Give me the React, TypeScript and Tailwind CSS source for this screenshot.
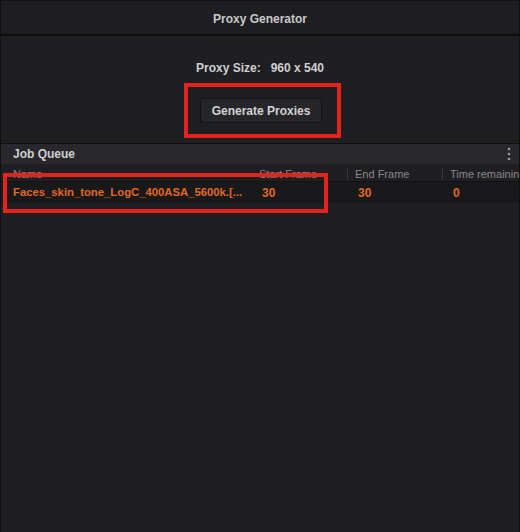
import React from "react";

export default function App() {
  return (
    <div
      className="relative w-[520px] h-[532px] overflow-hidden bg-[#1f1e21] border-x border-t border-[#111113] flex flex-col"
      style={{ fontFamily: '"Liberation Sans", Arial, sans-serif' }}
    >
      {/* Title bar */}
      <div className="h-[35px] shrink-0 flex items-center justify-center pt-[3px] border-b-2 border-[#0d0d0e] bg-[#1e1e20]">
        <span className="text-[12px] font-bold text-[#cacaca]">Proxy Generator</span>
      </div>

      {/* Proxy section */}
      <div className="flex flex-col items-center pt-[24px]">
        <div className="h-[16px] leading-[16px] text-[12px] font-bold text-[#d0d0d0] whitespace-pre">
          Proxy Size:   960 x 540
        </div>
        <div className="mt-[7px] ml-[5px] w-[157px] h-[55px] border-4 border-[#e3231f] flex items-center justify-start pl-[12px]">
          <button className="w-[122px] h-[25px] bg-[#26262a] border border-[#141416] rounded-[2px] text-[12px] font-bold text-[#d2d2d2] flex items-center justify-center">
            Generate Proxies
          </button>
        </div>
      </div>

      {/* Job queue */}
      <div className="mt-[5px] border-t border-[#0f0f10]">
        <div className="h-[20px] bg-[#28272b] flex items-center justify-between pl-[12px] pr-[8px]">
          <span className="text-[12px] font-bold text-[#cfcfcf]">Job Queue</span>
          <svg width="4" height="14" viewBox="0 0 4 14">
            <circle cx="2" cy="2" r="1.3" fill="#9a9a9a" />
            <circle cx="2" cy="7" r="1.3" fill="#9a9a9a" />
            <circle cx="2" cy="12" r="1.3" fill="#9a9a9a" />
          </svg>
        </div>
        <div className="h-[18px] pt-[2px] grid grid-cols-[250px_97px_95px_173px] items-center border-b border-[#121214] text-[11px] text-[#8a8a8c] whitespace-nowrap">
          <div className="pl-[12px]">Name</div>
          <div className="pl-[8px] border-r border-[#3a3a3d] h-[11px] leading-[11px]">Start Frame</div>
          <div className="pl-[7px] border-r border-[#3a3a3d] h-[11px] leading-[11px]">End Frame</div>
          <div className="pl-[7px] overflow-hidden">Time remainin</div>
        </div>
        <div className="h-[21px] grid grid-cols-[250px_97px_95px_173px] items-center bg-[#19181b] text-[12px] font-bold text-[#e2691f] whitespace-nowrap">
          <div className="pl-[12px] text-[11.3px]">Faces_skin_tone_LogC_400ASA_5600k.[...</div>
          <div className="pl-[11px]">30</div>
          <div className="pl-[10px]">30</div>
          <div className="pl-[10px]">0</div>
        </div>
      </div>

      {/* Annotation box over the job row */}
      <div className="absolute left-[2px] top-[172px] w-[325px] h-[40px] border-4 border-[#e3231f] pointer-events-none" />
    </div>
  );
}
